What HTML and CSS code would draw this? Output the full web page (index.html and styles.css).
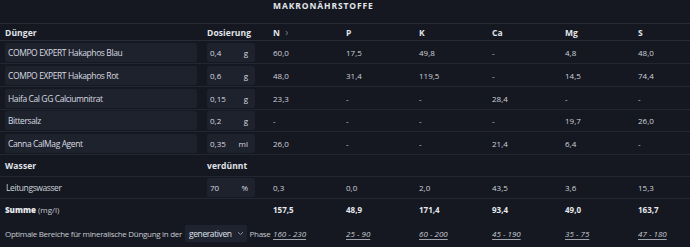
FILE: index.html
```html
<!DOCTYPE html>
<html lang="de">
<head>
<meta charset="utf-8">
<link rel="stylesheet" href="styles.css">
</head>
<body>
<table class="tbl">
  <colgroup>
    <col class="c-name"><col class="c-dose"><col class="c-n"><col class="c-n"><col class="c-n"><col class="c-n"><col class="c-n"><col class="c-last">
  </colgroup>
  <thead>
    <tr class="title-row"><th></th><th></th><th colspan="6" class="title">MAKRONÄHRSTOFFE</th></tr>
    <tr class="head-row">
      <th>Dünger</th><th>Dosierung</th>
      <th>N <span class="chev">›</span></th><th>P</th><th>K</th><th>Ca</th><th>Mg</th><th>S</th>
    </tr>
  </thead>
  <tbody>
    <tr class="r23"><td><div class="field">COMPO EXPERT Hakaphos Blau</div></td><td><div class="dose"><span>0,4</span><span>g</span></div></td><td>60,0</td><td>17,5</td><td>49,8</td><td>-</td><td>4,8</td><td>48,0</td></tr>
    <tr class="r23"><td><div class="field">COMPO EXPERT Hakaphos Rot</div></td><td><div class="dose"><span>0,6</span><span>g</span></div></td><td>48,0</td><td>31,4</td><td>119,5</td><td>-</td><td>14,5</td><td>74,4</td></tr>
    <tr class="r23"><td><div class="field">Haifa Cal GG Calciumnitrat</div></td><td><div class="dose"><span>0,15</span><span>g</span></div></td><td>23,3</td><td>-</td><td>-</td><td>28,4</td><td>-</td><td>-</td></tr>
    <tr class="r22"><td><div class="field">Bittersalz</div></td><td><div class="dose"><span>0,2</span><span>g</span></div></td><td>-</td><td>-</td><td>-</td><td>-</td><td>19,7</td><td>26,0</td></tr>
    <tr class="r23"><td><div class="field">Canna CalMag Agent</div></td><td><div class="dose"><span>0,35</span><span>ml</span></div></td><td>26,0</td><td>-</td><td>-</td><td>21,4</td><td>6,4</td><td>-</td></tr>
    <tr class="r22 sub-head"><th>Wasser</th><th>verdünnt</th><td></td><td></td><td></td><td></td><td></td><td></td></tr>
    <tr class="r22"><td class="plain">Leitungswasser</td><td><div class="dose"><span>70</span><span>%</span></div></td><td>0,3</td><td>0,0</td><td>2,0</td><td>43,5</td><td>3,6</td><td>15,3</td></tr>
    <tr class="sum-row"><td colspan="2"><b>Summe</b> <span class="unit">(mg/l)</span></td><td>157,5</td><td>48,9</td><td>171,4</td><td>93,4</td><td>49,0</td><td>163,7</td></tr>
    <tr class="opt-row">
      <td colspan="2" class="opt-cell"><div class="opt">Optimale Bereiche für mineralische Düngung in der <span class="select">generativen <svg width="7" height="5" viewBox="0 0 7 5"><path d="M1 1.2 L3.5 3.6 L6 1.2" fill="none" stroke="#8a8f9a" stroke-width="1"/></svg></span> Phase</div></td>
      <td><span class="range">160 - 230</span></td><td><span class="range">25 - 90</span></td><td><span class="range">60 - 200</span></td><td><span class="range">45 - 190</span></td><td><span class="range">35 - 75</span></td><td><span class="range">47 - 180</span></td>
    </tr>
  </tbody>
</table>
</body>
</html>
```

FILE: styles.css
```css
html, body {
  margin: 0;
  padding: 0;
  background: #151821;
}
body {
  font-family: "Open Sans", "Noto Sans", sans-serif;
  font-size: 8px;
  color: #cfd3da;
  width: 690px;
  height: 247px;
  overflow: hidden;
}
.tbl {
  width: 690px;
  border-collapse: collapse;
  table-layout: fixed;
}
.c-name { width: 202px; }
.c-dose { width: 66px; }
.c-n { width: 73px; }
.c-last { width: 57px; }
th, td {
  text-align: left;
  padding: 0 5px;
  vertical-align: middle;
  white-space: nowrap;
}
.title-row th {
  height: 23px;
  vertical-align: top;
  padding-top: 0;
  border-bottom: 1px solid #262b36;
}
.title {
  font-size: 8.5px;
  font-weight: 700;
  color: #e4e7ec;
  letter-spacing: 0.9px;
}
.head-row th {
  height: 16px;
  font-size: 8.5px;
  font-weight: 700;
  letter-spacing: 0.1px;
  color: #e1e4ea;
  border-bottom: 1px solid #262b36;
}
.chev {
  color: #7d828d;
  font-weight: 400;
  font-size: 10px;
  margin-left: 3px;
}
.r23 { height: 23px; }
.r22 { height: 22px; }
tbody td, tbody th {
  border-bottom: 1px solid #222733;
}
.field {
  background: #1e222c;
  height: 19px;
  line-height: 19px;
  border-radius: 2px;
  padding: 0 3px;
  color: #d8dbe1;
  font-size: 8.5px;
  letter-spacing: -0.4px;
}
.dose {
  background: #1e222c;
  height: 19px;
  line-height: 19px;
  width: 48px;
  border-radius: 2px;
  padding: 0 7px 0 3px;
  box-sizing: border-box;
  display: flex;
  justify-content: space-between;
  color: #d8dbe1;
}
.plain {
  padding-left: 6px;
  font-size: 8.5px;
  letter-spacing: -0.4px;
}
.sub-head th {
  font-size: 8.5px;
  font-weight: 700;
  letter-spacing: 0.1px;
  color: #e1e4ea;
}
.sum-row td {
  height: 20px;
  font-weight: 700;
  color: #e6e8ed;
  border-top: 1px solid #2a2f3a;
  border-bottom: none;
}
.sum-row .unit {
  font-weight: 400;
  color: #c4c8cf;
}
.opt-row td {
  border-bottom: none;
  height: 28px;
}
.opt-cell { padding-right: 0; }
.opt {
  display: flex;
  align-items: center;
  gap: 3px;
  color: #c6cad1;
  font-size: 8px;
  letter-spacing: -0.3px;
}
.select {
  display: inline-flex;
  align-items: center;
  gap: 5px;
  background: #1f2330;
  border-radius: 2px;
  height: 17px;
  padding: 0 3px 0 4px;
  color: #dfe2e8;
  font-size: 8.5px;
  letter-spacing: -0.4px;
}
.range {
  font-style: italic;
  color: #c8ccd3;
  text-decoration: underline;
  text-decoration-color: #9ea3ad;
  text-underline-offset: 2px;
}
```
